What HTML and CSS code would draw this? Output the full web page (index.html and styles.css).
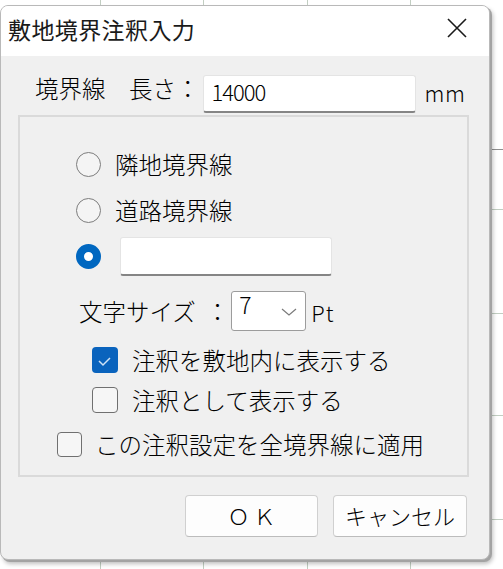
FILE: index.html
```html
<!DOCTYPE html>
<html lang="ja">
<head>
<meta charset="utf-8">
<title>敷地境界注釈入力</title>
<link rel="stylesheet" href="styles.css">
</head>
<body>
<div class="dialog">
  <div class="titlebar">
    <div class="title">敷地境界注釈入力</div>
    <svg class="close" width="20" height="20" viewBox="0 0 20 20"><path d="M1 1L19 19M19 1L1 19" stroke="#1a1a1a" stroke-width="1.6" fill="none"/></svg>
  </div>
  <div class="client">
    <div class="len-row">
      <span class="lbl">境界線　長さ：</span>
      <div class="field len"><span class="num">14000</span></div>
      <span class="unit">mm</span>
    </div>
    <div class="group">
      <div class="row opt"><span class="radio"></span><span class="txt">隣地境界線</span></div>
      <div class="row opt"><span class="radio"></span><span class="txt">道路境界線</span></div>
      <div class="row opt"><span class="radio on"></span><div class="field custom"></div></div>
      <div class="row size">
        <span class="txt">文字サイズ</span><span class="colon">：</span>
        <div class="select"><span class="num">7</span><svg class="chev" width="16" height="8" viewBox="0 0 16 8"><path d="M1 1L8 7L15 1" stroke="#7a7a7a" stroke-width="1.2" fill="none"/></svg></div>
        <span class="pt">Pt</span>
      </div>
      <div class="row sub"><span class="check on"><svg width="26" height="26" viewBox="0 0 26 26"><path d="M7 14L11 18L18 11" stroke="#cfe2f6" stroke-width="1.5" fill="none"/></svg></span><span class="txt">注釈を敷地内に表示する</span></div>
      <div class="row sub"><span class="check"></span><span class="txt">注釈として表示する</span></div>
      <div class="row all"><span class="check"></span><span class="txt">この注釈設定を全境界線に適用</span></div>
    </div>
    <div class="buttons">
      <button class="btn ok">ＯＫ</button>
      <button class="btn">キャンセル</button>
    </div>
  </div>
</div>
</body>
</html>
```
FILE: styles.css
```css
html, body {
  margin: 0;
  height: 569px;
  overflow: hidden;
}
body {
  padding-top: 5px;
  box-sizing: border-box;
  font-family: "Noto Sans CJK JP", sans-serif;
  font-weight: 300;
  color: #000;
  background-color: #fff;
  background-image:
    linear-gradient(#c2cec2, #c2cec2),
    linear-gradient(#c2cec2, #c2cec2),
    linear-gradient(#c2cec2, #c2cec2),
    linear-gradient(#c2cec2, #c2cec2),
    linear-gradient(#8f8f8f, #8f8f8f),
    linear-gradient(#c2cec2, #c2cec2),
    linear-gradient(#c2cec2, #c2cec2),
    linear-gradient(#c2cec2, #c2cec2),
    linear-gradient(#c2cec2, #c2cec2);
  background-size: 1px 100%, 1px 100%, 1px 100%, 1px 100%, 100% 1px, 100% 1px, 100% 1px, 100% 1px, 100% 1px;
  background-position: 100px 0, 203px 0, 307px 0, 410px 0, 0 149px, 0 209px, 0 313px, 0 415px, 0 519px;
  background-repeat: no-repeat;
}

.dialog {
  width: 490px;
  box-sizing: border-box;
  border: 1px solid #b9b9b9;
  border-radius: 8px;
  overflow: hidden;
  background: #f0f0f0;
  box-shadow: 2px 2px 0 0 #a3a3a3, 3px 4px 4px rgba(0, 0, 0, 0.25);
}

.titlebar {
  height: 50px;
  background: #fff;
  display: flex;
  align-items: flex-start;
  justify-content: space-between;
}
.title {
  margin-left: 7px;
  font-size: 23px;
  font-weight: 400;
  line-height: 46px;
  letter-spacing: 0.4px;
  color: #1a1a1a;
}
.close {
  margin-top: 12px;
  margin-right: 22px;
}

.client {
  padding-bottom: 22px;
}

.len-row {
  display: flex;
  align-items: flex-start;
  margin-top: 19px;
  padding-left: 34px;
}
.lbl {
  font-size: 23.5px;
  line-height: 26px;
}
.field {
  box-sizing: border-box;
  background: #fff;
  border: 1px solid #e4e4e4;
  border-bottom: 2px solid #858585;
  border-radius: 3px;
}
.len {
  width: 213px;
  height: 38px;
  margin-left: 3px;
  padding: 0 8px 5px;
  display: flex;
  align-items: center;
}
.num {
  font-size: 22px;
  letter-spacing: -1px;
  line-height: 1;
}
.unit {
  font-size: 22px;
  letter-spacing: 0.5px;
  line-height: 26px;
  margin-top: 4px;
  margin-left: 9px;
}

.group {
  margin: 2px 20px 0 17px;
  border: 2px solid #dadada;
  padding: 27px 0 11px;
  display: flex;
  flex-direction: column;
}
.row {
  display: flex;
  align-items: center;
  height: 40px;
}
.txt {
  font-size: 23.5px;
  line-height: 30px;
  white-space: nowrap;
}
.opt { padding-left: 56px; }
.opt + .opt { margin-top: 6px; }
.size { padding-left: 59px; margin-top: 15px; }
.sub { padding-left: 72px; }
.size + .sub { margin-top: 9px; }
.sub + .sub { margin-top: 0; }
.all { padding-left: 37px; margin-top: 4px; }

.radio {
  width: 25px;
  height: 25px;
  box-sizing: border-box;
  border-radius: 50%;
  border: 1.5px solid #7d7d7d;
  background: #f4f4f4;
  margin-right: 14px;
  flex: none;
}
.radio.on {
  border: 8px solid #0067c0;
  background: #fff;
}
.custom {
  width: 212px;
  height: 39px;
  margin-left: 5px;
}

.colon {
  font-size: 23.5px;
  line-height: 30px;
  margin-left: 10px;
}
.select {
  width: 75px;
  height: 40px;
  box-sizing: border-box;
  margin-left: 2px;
  border: 1px solid #9c9c9c;
  border-radius: 3px;
  background: #fff;
  display: flex;
  align-items: center;
  padding-left: 7px;
}
.select .num {
  margin-bottom: 14px;
  font-size: 23px;
}
.chev {
  margin-left: auto;
  margin-right: 8px;
  margin-top: 2px;
}
.pt {
  font-size: 22px;
  letter-spacing: 1px;
  line-height: 26px;
  margin-left: 5px;
  margin-top: 2px;
}

.check {
  width: 25px;
  height: 25px;
  box-sizing: border-box;
  border: 1.5px solid #707070;
  border-radius: 4px;
  background: #f6f6f6;
  margin-right: 14px;
  flex: none;
}
.sub .check { width: 26px; height: 26px; }
.check.on {
  border: none;
  background: #0a63bd;
}
.check.on svg { display: block; }
.all .check { margin-right: 13px; }

.buttons {
  display: flex;
  justify-content: flex-end;
  gap: 15px;
  margin-top: 18px;
  padding-right: 22px;
}
.btn {
  width: 134px;
  height: 42px;
  box-sizing: border-box;
  border: 1px solid #d0d0d0;
  border-bottom-color: #bcbcbc;
  border-radius: 4px;
  background: #fdfdfd;
  font-family: "Noto Sans CJK JP", sans-serif;
  font-weight: 300;
  font-size: 22px;
  color: #000;
  padding: 0 0 3px;
  line-height: 1;
}
.btn.ok {
  width: 133px;
  letter-spacing: 4px;
  text-indent: 4px;
}
```
